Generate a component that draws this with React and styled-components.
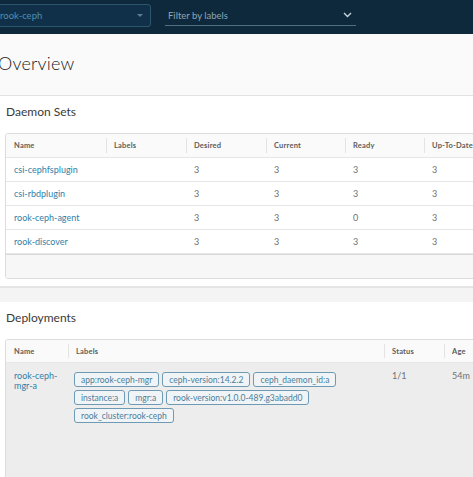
import React from "react";
import styled, { createGlobalStyle } from "styled-components";

const Global = createGlobalStyle`
  html, body { margin: 0; padding: 0; background: #f4f4f4; overflow: hidden; }
  body { font-family: Lato, "Open Sans", "Liberation Sans", sans-serif; width: 473px; height: 477px; }
`;

const Page = styled.div`
  width: 473px;
  height: 477px;
  overflow: hidden;
  display: flex;
  flex-direction: column;
  background: #f4f4f4;
`;

const NavBar = styled.header`
  height: 34px;
  flex: none;
  background: #0e293b;
  display: flex;
  align-items: center;
  gap: 14px;
  box-sizing: border-box;
  padding-bottom: 3px;
`;

const NsSelect = styled.div`
  margin-left: -20px;
  width: 171px;
  height: 23px;
  box-sizing: border-box;
  border: 1px solid #2c566c;
  border-radius: 3px;
  background: #10304a;
  display: flex;
  align-items: center;
  justify-content: space-between;
  padding: 0 7px 0 19px;
  color: #4f8fb0;
  font-size: 9.5px;
`;

const Caret = styled.span`
  width: 0;
  height: 0;
  border-left: 3px solid transparent;
  border-right: 3px solid transparent;
  border-top: 3px solid #5a7d90;
`;

const LabelFilter = styled.div`
  width: 191px;
  height: 20px;
  box-sizing: border-box;
  border-bottom: 1px solid #4f6f82;
  display: flex;
  align-items: center;
  justify-content: space-between;
  padding: 0 4px 0 3px;
  color: #8ea6b6;
  font-size: 9.5px;
`;

const Header = styled.div`
  height: 62px;
  flex: none;
  background: #fafafa;
  border-bottom: 1px solid #e2e2e2;
  display: flex;
  align-items: center;
  box-sizing: border-box;
  padding-bottom: 3px;
`;

const Title = styled.h1`
  margin: 0 0 0 -2px;
  font-family: Lato, "Open Sans", sans-serif;
  font-weight: 300;
  font-size: 18px;
  color: #1a1a1a;
  letter-spacing: 0.2px;
`;

const Card = styled.section`
  background: #ffffff;
  flex: none;
  padding: 0 0 ${(p) => p.$bottom || 0}px 5px;
  border-bottom: ${(p) => (p.$line ? "2px solid #e4e4e4" : "none")};
`;

const CardTitle = styled.h2`
  margin: 0;
  height: 37px;
  box-sizing: border-box;
  padding: 8px 0 0 1px;
  font-weight: 400;
  font-size: 12px;
  line-height: 15px;
  color: #3a3a3a;
`;

const Gap = styled.div`
  height: 14px;
  flex: none;
  background: #f4f4f4;
`;

const Table = styled.div`
  width: ${(p) => p.$width}px;
  border: 1px solid #dcdcdc;
  border-radius: 3px;
  overflow: hidden;
  box-sizing: border-box;
`;

const Row = styled.div`
  display: grid;
  grid-template-columns: ${(p) => p.$cols};
  min-height: ${(p) => p.$h || 24}px;
  background: ${(p) => p.$bg || "#fff"};
  border-bottom: 1px solid #e6e6e6;
  box-sizing: border-box;
  &:last-child { border-bottom: none; }
`;

const HeadCell = styled.div`
  display: flex;
  align-items: center;
  padding-left: 8px;
  font-size: 7.5px;
  font-weight: 700;
  color: #5c5c5c;
  letter-spacing: 0.2px;
  position: relative;
  & + &::before {
    content: "";
    position: absolute;
    left: 0;
    top: 4px;
    bottom: 4px;
    width: 1px;
    background: #e3e3e3;
  }
`;

const Cell = styled.div`
  display: flex;
  align-items: ${(p) => (p.$top ? "flex-start" : "center")};
  padding: ${(p) => (p.$top ? "8px 8px 0 8px" : "0 0 0 8px")};
  font-size: 9px;
  line-height: 10px;
  color: #707070;
`;

const LabelCell = styled(Cell)`
  padding-left: 6px;
`;

const Link = styled.a`
  color: #2f7fa8;
  text-decoration: none;
  font-size: 9px;
  line-height: 10px;
`;

const Footer = styled.div`
  height: 23px;
  background: #f7f7f7;
  border-top: 1px solid #d8d8d8;
`;

const Chips = styled.div`
  display: flex;
  flex-wrap: wrap;
  gap: 3px;
  padding-top: 1px;
  max-width: 266px;
`;

const Chip = styled.span`
  height: 15px;
  box-sizing: border-box;
  border: 1px solid #6e9bb3;
  border-radius: 3px;
  background: #f1f4f6;
  color: #4a7e9b;
  font-size: 8.5px;
  padding: 0 6px;
  display: inline-flex;
  align-items: center;
  white-space: nowrap;
`;

const Chevron = () => (
  <svg width="9" height="6" viewBox="0 0 9 6" fill="none">
    <path d="M1 1l3.5 3.5L8 1" stroke="#c7d3da" strokeWidth="1.4" />
  </svg>
);

const dsCols = "100px 80px 80px 79px 79px 95px";
const daemonSets = [
  ["csi-cephfsplugin", 3, 3, 3, 3],
  ["csi-rbdplugin", 3, 3, 3, 3],
  ["rook-ceph-agent", 3, 3, 0, 3],
  ["rook-discover", 3, 3, 3, 3],
];

const depCols = "62px 316px 60px 60px";
const labels = [
  "app:rook-ceph-mgr",
  "ceph-version:14.2.2",
  "ceph_daemon_id:a",
  "instance:a",
  "mgr:a",
  "rook-version:v1.0.0-489.g3abadd0",
  "rook_cluster:rook-ceph",
];

export default function App() {
  return (
    <Page>
      <Global />
      <NavBar>
        <NsSelect>
          <span>rook-ceph</span>
          <Caret />
        </NsSelect>
        <LabelFilter>
          <span>Filter by labels</span>
          <Chevron />
        </LabelFilter>
      </NavBar>
      <Header>
        <Title>Overview</Title>
      </Header>
      <Card $bottom={7} $line>
        <CardTitle>Daemon Sets</CardTitle>
        <Table $width={514}>
          <Row $cols={dsCols} $bg="#fafafa">
            <HeadCell>Name</HeadCell>
            <HeadCell>Labels</HeadCell>
            <HeadCell>Desired</HeadCell>
            <HeadCell>Current</HeadCell>
            <HeadCell>Ready</HeadCell>
            <HeadCell>Up-To-Date</HeadCell>
          </Row>
          {daemonSets.map(([name, d, c, r, u]) => (
            <Row key={name} $cols={dsCols}>
              <Cell><Link>{name}</Link></Cell>
              <Cell />
              <Cell>{d}</Cell>
              <Cell>{c}</Cell>
              <Cell>{r}</Cell>
              <Cell>{u}</Cell>
            </Row>
          ))}
          <Footer />
        </Table>
      </Card>
      <Gap />
      <Card>
        <CardTitle>Deployments</CardTitle>
        <Table $width={520}>
          <Row $cols={depCols} $bg="#fafafa" $h={23}>
            <HeadCell>Name</HeadCell>
            <HeadCell>Labels</HeadCell>
            <HeadCell>Status</HeadCell>
            <HeadCell>Age</HeadCell>
          </Row>
          <Row $cols={depCols} $bg="#ededed" $h={140}>
            <Cell $top><Link>rook-ceph-<br />mgr-a</Link></Cell>
            <LabelCell $top>
              <Chips>
                {labels.map((l) => (
                  <Chip key={l}>{l}</Chip>
                ))}
              </Chips>
            </LabelCell>
            <Cell $top>1/1</Cell>
            <Cell $top>54m</Cell>
          </Row>
        </Table>
      </Card>
    </Page>
  );
}
